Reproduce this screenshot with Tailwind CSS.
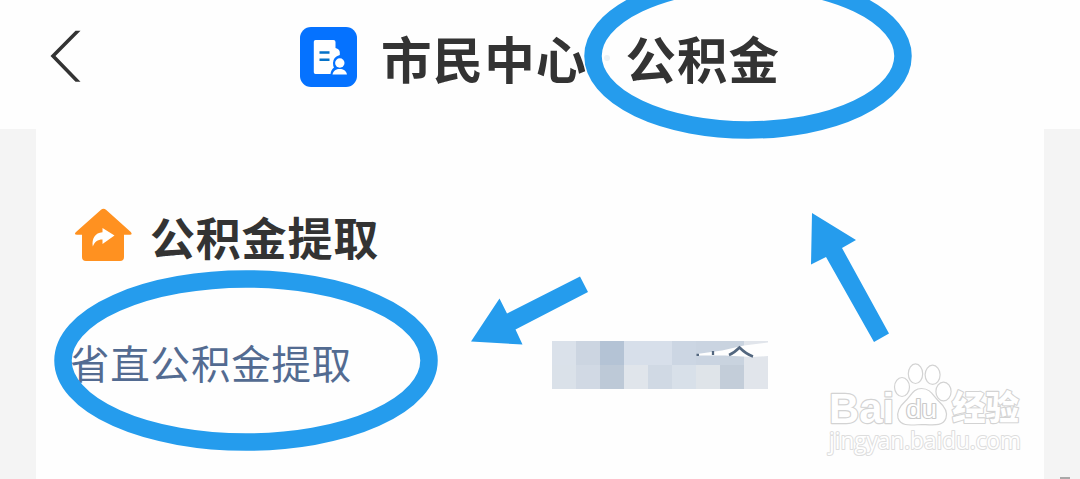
<!DOCTYPE html>
<html lang="zh-CN">
<head>
    <meta charset="UTF-8">
    <meta name="viewport" content="width=device-width, initial-scale=1.0">
    <title>市民中心 公积金</title>
    <script src="https://cdn.jsdelivr.net/npm/@tailwindcss/browser@4"></script>
</head>
<body class="relative w-[1080px] h-[479px] overflow-hidden bg-[#f4f4f4] font-['Noto_Sans_CJK_SC',sans-serif] text-[#333333]">
    <!-- Header -->
    <header class="flex h-[129px] items-start bg-[#fefefe] pl-[50px]">
        <svg class="mt-[30px] h-[53px] w-[32px] shrink-0" viewBox="0 0 32 53" fill="none">
            <path d="M25.500 .8H30.500L5.500 26L30.500 51.800H25.500L.5 26Z" fill="#333333"/>
        </svg>
        <svg class="mt-[27px] ml-[218px] h-[60px] w-[57px] shrink-0" viewBox="0 0 57 60">
            <rect width="57" height="60" rx="11" fill="#0572ff"/>
            <path d="M15.500 13H33.500Q35.500 13 35.500 15V21Q39.800 22 39.800 25.500V28Q33 30 33 36Q33 39 34 40.500Q31 42.500 30.500 47H15.500Q13.800 47 13.800 45.300V14.700Q13.800 13 15.500 13Z" fill="#fff"/>
            <path d="M19.500 25.500H29.500M19.500 32.700H29.500" stroke="#0572c8" stroke-width="2.600"/>
            <circle cx="39.800" cy="36" r="4.700" fill="#fff"/>
            <path d="M32.500 47.500C33.500 43.500 36 42 39.700 42S46 43.500 47 47.500Z" fill="#fff"/>
        </svg>
        <h1 class="mt-[21px] ml-[24px] flex text-[50.5px] leading-[72px] font-bold tracking-[1.1px] whitespace-nowrap">
            <span>市民中心</span>
            <span class="mt-[34px] ml-[17px] h-[6px] w-[6px] rounded-full bg-[#edf1f5]"></span>
            <span class="ml-[15px]">公积金</span>
        </h1>
    </header>

    <!-- Card -->
    <main class="mx-[36px] h-[350px] bg-[#fefefe] pl-[38px]">
        <div class="flex items-start pt-[78px]">
            <svg class="mt-px h-[54px] w-[58px] shrink-0" viewBox="0 0 58 54">
                <path d="M27 1.700Q29.500 0 32 1.700L56.800 24Q58.800 26.700 56 26.700H50V49Q50 53 46 53H12Q8 53 8 49V26.700H3Q-.5 26.700 2 24Z" fill="#ff9120"/>
                <path d="M28.500 20L40.500 27.500L28.500 36V31.500C23.500 31.500 20.500 34 18.800 38.500C17.500 31 21 24.500 28.500 24.200Z" fill="#fff"/>
            </svg>
            <h2 class="-mt-[2px] ml-[18px] text-[45px] leading-[64px] font-bold tracking-[0.8px] whitespace-nowrap">公积金提取</h2>
        </div>
        <div class="flex items-start">
            <a class="mt-[65px] -ml-[4px] block w-[482px] text-[39.5px] leading-[56px] tracking-[0.8px] whitespace-nowrap text-[#536b91]">省直公积金提取</a>
            <!-- Masked entry -->
            <div class="relative mt-[72px] grid grid-cols-[repeat(9,24px)] grid-rows-[24px_24px]">
                <i class="bg-[#dae1ea]"></i><i class="bg-[#ccd5e1]"></i><i class="bg-[#b4c3d5]"></i><i class="bg-[#d7dfea]"></i><i class="bg-[#d7dfea]"></i><i class="bg-[#ccd6e3]"></i><i class="bg-[#cad4e1]"></i><i class="bg-[#c9d3df]"></i><i class="bg-[#e1e5eb]"></i>
                <i class="bg-[#dae1e9]"></i><i class="bg-[#d1d9e4]"></i><i class="bg-[#bdc9d7]"></i><i class="bg-[#e0e5eb]"></i><i class="bg-[#d0d9e4]"></i><i class="bg-[#d8e0e9]"></i><i class="bg-[#dfe4e9]"></i><i class="bg-[#c3cdd9]"></i><i class="bg-[#e1e5eb]"></i>
                <svg class="absolute top-0 left-0 h-[48px] w-[216px]" viewBox="0 0 216 48">
                    <path d="M145 13L170 9.500L192 4.500L216 1.500V15L200 16L173 14.500L146 14.500Z" fill="#fefefe"/>
                    <path d="M177 14C182 12 185 9 187.500 6.500C191 10 195 13.500 201 15.500" fill="none" stroke="#53677f" stroke-width="2.600"/>
                    <path d="M161 10V14M144.500 13.800H147" stroke="#53677f" stroke-width="2.300"/>
                </svg>
            </div>
        </div>
    </main>

    <!-- Hand-drawn marks over the page -->
    <svg class="absolute inset-0 h-[479px] w-[1080px]" viewBox="0 0 1080 479">
        <g fill="none" stroke="#259ced" stroke-width="17.500">
            <ellipse cx="748" cy="56" rx="155" ry="74"/>
            <ellipse cx="246" cy="360.500" rx="183" ry="81.500"/>
        </g>
        <g fill="#259ced">
            <path d="M471 341.500L499.500 298.500L507 313.500L580 276.500L588 292L515.500 329.500L522.500 344.500Z"/>
            <path d="M812 213L856 240L842 248L889 333.500L874 342L826 257L811 264.500Z"/>
        </g>
        <!-- Watermark -->
        <g fill="#ffffff" stroke="#d3d3d3" stroke-width="1.200" stroke-linejoin="round">
            <ellipse cx="902" cy="387" rx="7.500" ry="9.500"/>
            <ellipse cx="915.500" cy="373.700" rx="7.200" ry="9.800"/>
            <ellipse cx="932.600" cy="374.800" rx="7.500" ry="9.600"/>
            <ellipse cx="943.500" cy="391.500" rx="7.600" ry="9.400"/>
            <path d="M921.500 388.500C931 388.500 933 396 939 401.500C944 406 948 412 946 418C943 426.500 934 425 922 424.500C911 425 901 427 898 418C896.500 411 900 406 905 401.500C911 396 913 388.500 921.500 388.500Z"/>
            <g paint-order="stroke">
                <text x="829" y="422.500" font-family="Liberation Sans, sans-serif" font-weight="700" font-size="43" textLength="65" lengthAdjust="spacingAndGlyphs" stroke-width="2.400">Bai</text>
                <text x="906" y="418" font-family="Liberation Sans, sans-serif" font-weight="400" font-size="25" textLength="31" lengthAdjust="spacingAndGlyphs" stroke="#cacaca" stroke-width="2.200">du</text>
                <text x="952" y="420" font-family="Noto Sans CJK SC, sans-serif" font-weight="900" font-size="34" textLength="67" lengthAdjust="spacingAndGlyphs" stroke-width="2.200">经验</text>
                <text x="829" y="449" font-family="Open Sans, sans-serif" font-weight="400" font-size="23" textLength="192" lengthAdjust="spacingAndGlyphs" stroke="#dddddd" stroke-width="2">jingyan.baidu.com</text>
            </g>
        </g>
        <rect x="1060" y="477" width="10" height="2" fill="#a9a9a9"/>
    </svg>
</body>
</html>
